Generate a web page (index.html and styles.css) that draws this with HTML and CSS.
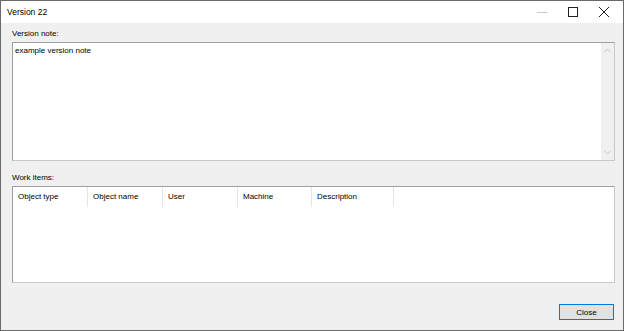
FILE: index.html
```html
<!DOCTYPE html>
<html>
<head>
<meta charset="utf-8">
<link rel="stylesheet" href="styles.css">
</head>
<body>
<div class="window">
  <div class="titlebar">
    <span class="title">Version 22</span>
    <div class="controls">
      <span class="ctl"><svg width="10" height="10" viewBox="0 0 10 10"><path d="M0 5.5H10" stroke="#c8c8c8" stroke-width="1"/></svg></span>
      <span class="ctl"><svg width="10" height="10" viewBox="0 0 10 10"><rect x="0.5" y="0.5" width="9" height="9" fill="none" stroke="#222" stroke-width="1"/></svg></span>
      <span class="ctl"><svg width="10" height="10" viewBox="0 0 10 10"><path d="M0 0L10 10M10 0L0 10" stroke="#222" stroke-width="1"/></svg></span>
    </div>
  </div>
  <div class="content">
    <div class="label">Version note:</div>
    <div class="textbox">
      <div class="textarea">example version note</div>
      <div class="vscroll">
        <svg width="7" height="5" viewBox="0 0 7 5"><path d="M0.5 4L3.5 1L6.5 4" fill="none" stroke="#c2c2c2" stroke-width="1"/></svg>
        <svg width="7" height="5" viewBox="0 0 7 5"><path d="M0.5 1L3.5 4L6.5 1" fill="none" stroke="#c2c2c2" stroke-width="1"/></svg>
      </div>
    </div>
    <div class="label label2">Work items:</div>
    <div class="listview">
      <div class="header">
        <div class="col c1">Object type</div>
        <div class="col c2">Object name</div>
        <div class="col c3">User</div>
        <div class="col c4">Machine</div>
        <div class="col c5">Description</div>
      </div>
    </div>
    <div class="buttons">
      <button class="btn">Close</button>
    </div>
  </div>
</div>
</body>
</html>
```
FILE: styles.css
```css
html, body {
  margin: 0;
  padding: 0;
  background: #f0f0f0;
}
.window {
  width: 624px;
  height: 331px;
  box-sizing: border-box;
  border: 1px solid #6a6a6a;
  background: #f0f0f0;
  font-family: "Liberation Sans", Arial, sans-serif;
  font-size: 8px;
  color: #000;
  display: flex;
  flex-direction: column;
}
.titlebar {
  height: 22px;
  background: #fff;
  display: flex;
  align-items: center;
  justify-content: space-between;
}
.title {
  padding-left: 6px;
  font-size: 8.5px;
  color: #000;
}
.controls {
  display: flex;
  align-items: center;
  height: 100%;
  padding-right: 4px;
}
.ctl {
  width: 31px;
  height: 22px;
  display: flex;
  align-items: center;
  justify-content: center;
}
.content {
  flex: 1;
  padding: 3px 8px 0 11px;
  display: flex;
  flex-direction: column;
}
.label {
  height: 16px;
  line-height: 16px;
  color: #000;
}
.label2 {
  margin-top: 9px;
}
.textbox {
  height: 119px;
  box-sizing: border-box;
  border: 1px solid;
  border-color: #a0a0a0 #c9c9c9 #c9c9c9 #a0a0a0;
  background: #fff;
  display: flex;
}
.textarea {
  flex: 1;
  padding: 2px 2px;
  line-height: 11px;
}
.vscroll {
  width: 13px;
  background: #f0f0f0;
  display: flex;
  flex-direction: column;
  align-items: center;
  justify-content: space-between;
  padding: 5px 0 5px;
}
.listview {
  height: 97px;
  box-sizing: border-box;
  border: 1px solid;
  border-color: #a0a0a0 #c9c9c9 #c9c9c9 #a0a0a0;
  background: #fff;
}
.header {
  display: flex;
  height: 20px;
}
.col {
  box-sizing: border-box;
  padding-left: 5px;
  line-height: 20px;
  border-right: 1px solid #e5e5e5;
}
.c1 { width: 75px; }
.c2 { width: 75px; }
.c3 { width: 75px; }
.c4 { width: 74px; }
.c5 { width: 82px; }
.buttons {
  display: flex;
  justify-content: flex-end;
  margin-top: 21px;
}
.btn {
  width: 55px;
  height: 16px;
  margin: 0 1px 0 0;
  box-sizing: border-box;
  border: 1px solid #0078d7;
  background: #e1e1e1;
  font-family: "Liberation Sans", Arial, sans-serif;
  font-size: 8px;
  color: #000;
  padding: 0;
}
```
